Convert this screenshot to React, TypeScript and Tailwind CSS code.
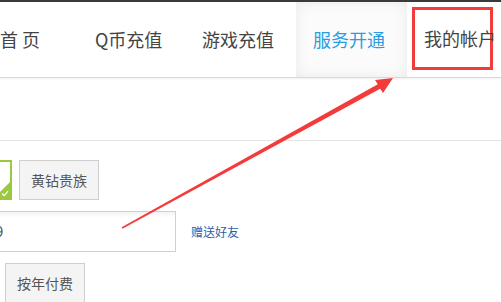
export default function App() {
    return (
        <div className="relative w-[501px] h-[302px] overflow-hidden bg-white text-[#444]" style={{ fontFamily: '"Noto Sans CJK SC", "Noto Sans", sans-serif' }}>
            {/* top nav */}
            <div className="h-[2px] bg-[#3a3a3a]"></div>
            <nav className="flex h-[76px] items-stretch border-b border-[#d9d9d9] shadow-[0_1px_2px_rgba(0,0,0,0.06)] text-[18px] text-[#444]">
                <div className="w-[95px] flex items-center whitespace-pre">首 页</div>
                <div className="w-[107px] flex items-center">Q币充值</div>
                <div className="w-[94px] flex items-center">游戏充值</div>
                <div className="w-[111px] pl-[17px] flex items-center text-[#2a9de2] bg-[#fbfbfb] shadow-[inset_0_0_14px_rgba(0,0,0,0.07)]">服务开通</div>
                <div className="ml-[5px] mt-[5px] w-[81px] h-[63px] border-[3px] border-[#f23b3b] pl-[9px] flex items-center whitespace-nowrap">我的帐户</div>
            </nav>

            <div className="h-[62px]"></div>
            <div className="h-px bg-[#e4e4e4]"></div>

            {/* options */}
            <div className="pt-[19px] flex flex-col gap-[11px] text-[14px]">
                <div className="flex gap-[7px]">
                    <div className="relative ml-[-68px] w-[80px] h-[40px] border-2 border-[#9cc740] bg-white overflow-hidden">
                        <div className="absolute right-0 bottom-0 w-0 h-0 border-l-[16px] border-l-transparent border-b-[16px] border-b-[#9cc740]"></div>
                        <svg className="absolute right-[1px] bottom-[1px]" width="8" height="7" viewBox="0 0 8 7">
                            <path d="M1 3.5 L3.2 5.6 L7 1.2" fill="none" stroke="#fff" strokeWidth="1.3" />
                        </svg>
                    </div>
                    <button className="w-[80px] h-[40px] border border-[#cfcfcf] bg-[#f4f4f4] text-[#555]">黄钻贵族</button>
                </div>
                <div className="flex items-center">
                    <div className="w-[176px] h-[41px] border border-[#d0d0d0] border-l-0 bg-gradient-to-b from-[#f4f4f4] to-white to-[15%] flex items-center overflow-hidden">
                        <span className="ml-[-5px] text-[15px] text-[#555]">9</span>
                    </div>
                    <a className="ml-[15px] text-[12px] text-[#2b5fab]">赠送好友</a>
                </div>
                <div className="flex pl-[5px]">
                    <button className="w-[80px] h-[40px] border border-[#cfcfcf] bg-[#f4f4f4] text-[#555]">按年付费</button>
                </div>
            </div>

            {/* arrow annotation */}
            <svg className="absolute left-0 top-0 pointer-events-none" width="501" height="302" viewBox="0 0 501 302">
                <polygon points="121.6,227.3 377.8,84.3 375,80 393,78 383,93 380.2,88.7 122.4,228.7" fill="#f43b3b" />
            </svg>
        </div>
    );
}
